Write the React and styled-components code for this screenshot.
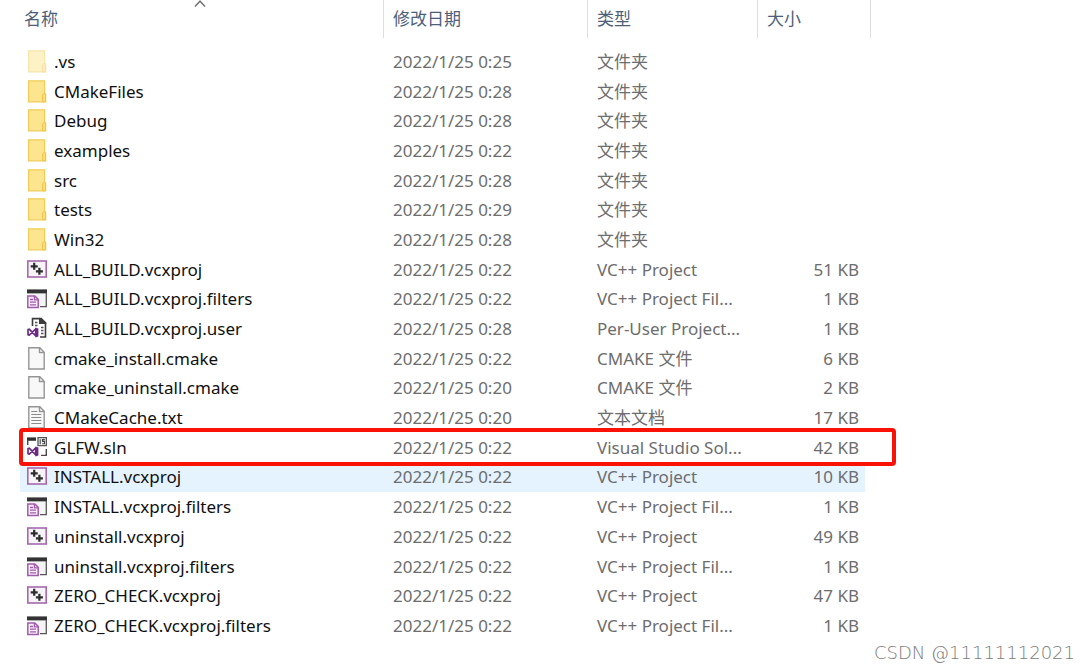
import React from 'react';
import styled, { createGlobalStyle } from 'styled-components';

const GlobalStyle = createGlobalStyle`
  body {
    margin: 0;
    background: #ffffff;
    font-family: "Noto Sans", "Noto Sans CJK SC", sans-serif;
    font-size: 17px;
    line-height: 24px;
  }
`;

const Explorer = styled.main`
  position: relative;
  min-height: 100vh;
  padding-left: 20px;
  box-sizing: border-box;
`;

const FileTable = styled.table`
  width: calc(100% - 219px);
  height: calc(100vh - 29px);
  table-layout: fixed;
  border-collapse: separate;
  border-spacing: 0;
`;

const Column = styled.col`
  width: ${props => props.$width};
`;

const HeaderCell = styled.th`
  position: relative;
  height: 47px;
  padding: 0;
  vertical-align: top;
`;

const HeaderButton = styled.button`
  display: block;
  width: 100%;
  height: 38px;
  padding: 0 0 0 ${props => (props.$first ? '4px' : '9px')};
  border: 0;
  border-right: 1px solid #dedede;
  background: none;
  color: #4c607a;
  font: inherit;
  font-weight: 400;
  text-align: left;
`;

const SortArrow = styled.svg`
  position: absolute;
  top: 0;
  left: calc(50% - 8px);
  width: 12px;
  height: 8px;
`;

const Row = styled.tr`
  position: relative;
  z-index: ${props => (props.$raised ? 1 : 'auto')};
`;

const Cell = styled.td`
  padding: 0 0 0 9px;
  color: #6d6d6d;
  background: ${props => (props.$selected ? '#e5f3ff' : 'transparent')};
  background-clip: padding-box;
  white-space: nowrap;
  vertical-align: middle;
`;

const NameCell = styled(Cell)`
  padding-left: 7px;
  color: #101010;
`;

const SizeCell = styled(Cell)`
  padding-right: 6px;
  border-right: 6px solid transparent;
  text-align: right;
`;

const FileName = styled.div`
  display: flex;
  align-items: center;
  gap: 7px;
`;

const Icon = styled.svg`
  flex: none;
  width: 20px;
  height: 24px;
  opacity: ${props => (props.$faded ? 0.5 : 1)};
`;

const Outline = styled.span`
  position: absolute;
  top: -5px;
  right: -25px;
  bottom: -3px;
  left: -1px;
  border: 4px solid #fb1207;
  border-radius: 4px;
  pointer-events: none;
`;

const Watermark = styled.div`
  position: absolute;
  right: 15px;
  bottom: 5px;
  color: #7c7c7c;
  font-family: "DejaVu Sans", sans-serif;
  font-size: 18px;
  font-weight: 200;
`;

const VsLogo = () => (
  <>
    <path
      d="M1 12.6v5.2l1.2.4 6.6-6.4v7L2.2 12.2z"
      fill="none"
      stroke="#6d2a85"
      strokeWidth="1.7"
      strokeLinejoin="round"
    />
    <path d="M8.4 10.4l3 1.2v7.8l-3 1.2z" fill="#6d2a85" />
  </>
);

const PageShape = () => (
  <path d="M1.8 .7h11l4.4 4.5V22H1.8zM12.5 .7v4.8h4.7" fill="#f8f8f8" stroke="#959595" strokeWidth="1.4" />
);

const drawings = {
  folder: (
    <>
      <path d="M1.6 .8h16v13h1v8h-17z" fill="#fde58f" stroke="#f0cd58" strokeWidth="1.2" />
      <path d="M15.6 21.8v-7l1.5-1.6 1.5 1.6v7z" fill="#fbdc78" stroke="#edc54b" />
    </>
  ),
  project: (
    <>
      <rect x=".8" y="3" width="18.4" height="16" fill="#f6f4f6" stroke="#a768b0" strokeWidth="1.6" />
      <path d="M7.2 4.8v7M3.7 8.3h7M12.4 9.8v7M8.9 13.3h7" stroke="#2c2c2c" strokeWidth="2.2" />
    </>
  ),
  filters: (
    <>
      <path d="M2 7h17v12.5H2z" fill="#f4f4f4" />
      <path d="M0 2.4h20v4H0z" fill="#333333" />
      <path d="M19.3 6v13.6H13" fill="none" stroke="#565656" strokeWidth="1.3" />
      <path d="M.8 9h7l3.4 3.4v8.2H.8z" fill="#f8effa" stroke="#a15bad" strokeWidth="1.5" />
      <path d="M7.4 9v3.8h3.8M3 12.5h3M3 15.2h6M3 17.8h6" fill="none" stroke="#a15bad" strokeWidth="1.3" />
    </>
  ),
  user: (
    <>
      <path d="M5.5 9V1.6h7M18.5 6v14H13" fill="none" stroke="#3c3c3c" strokeWidth="1.6" />
      <path d="M12 .8h2.6l4.7 4.6V7H12z" fill="#3c3c3c" />
      <path d="M8 5.5h2.5M8 8.5h2.5M14 10.5h2.5M14 13.5h2.5M14 16.5h2.5" stroke="#555555" strokeWidth="1.3" />
      <VsLogo />
    </>
  ),
  file: <PageShape />,
  text: (
    <>
      <PageShape />
      <path d="M4.3 5.5h6M4.3 8.5h10M4.3 11.5h10M4.3 14.5h10M4.3 17.5h10" stroke="#898989" strokeWidth="1.2" />
    </>
  ),
  solution: (
    <>
      <path d="M0 1.4h9v3.4H0z" fill="#333333" />
      <path d="M.7 4v5M14 19.4h5.3V13" fill="none" stroke="#494949" strokeWidth="1.4" />
      <path d="M11 1.6h8.4v8H11z" fill="#f2f2f2" stroke="#555555" strokeWidth="1.3" />
      <path d="M13.2 3.2v5M17.8 3.6h-2.3v1.8h2v2.3h-2.3" fill="none" stroke="#444444" strokeWidth="1.1" />
      <VsLogo />
    </>
  )
};

const files = [
  { name: '.vs', date: '2022/1/25 0:25', type: '文件夹', icon: 'folder', faded: true },
  { name: 'CMakeFiles', date: '2022/1/25 0:28', type: '文件夹', icon: 'folder' },
  { name: 'Debug', date: '2022/1/25 0:28', type: '文件夹', icon: 'folder' },
  { name: 'examples', date: '2022/1/25 0:22', type: '文件夹', icon: 'folder' },
  { name: 'src', date: '2022/1/25 0:28', type: '文件夹', icon: 'folder' },
  { name: 'tests', date: '2022/1/25 0:29', type: '文件夹', icon: 'folder' },
  { name: 'Win32', date: '2022/1/25 0:28', type: '文件夹', icon: 'folder' },
  { name: 'ALL_BUILD.vcxproj', date: '2022/1/25 0:22', type: 'VC++ Project', size: '51 KB', icon: 'project' },
  { name: 'ALL_BUILD.vcxproj.filters', date: '2022/1/25 0:22', type: 'VC++ Project Fil...', size: '1 KB', icon: 'filters' },
  { name: 'ALL_BUILD.vcxproj.user', date: '2022/1/25 0:28', type: 'Per-User Project...', size: '1 KB', icon: 'user' },
  { name: 'cmake_install.cmake', date: '2022/1/25 0:22', type: 'CMAKE 文件', size: '6 KB', icon: 'file' },
  { name: 'cmake_uninstall.cmake', date: '2022/1/25 0:20', type: 'CMAKE 文件', size: '2 KB', icon: 'file' },
  { name: 'CMakeCache.txt', date: '2022/1/25 0:20', type: '文本文档', size: '17 KB', icon: 'text' },
  { name: 'GLFW.sln', date: '2022/1/25 0:22', type: 'Visual Studio Sol...', size: '42 KB', icon: 'solution', outlined: true },
  { name: 'INSTALL.vcxproj', date: '2022/1/25 0:22', type: 'VC++ Project', size: '10 KB', icon: 'project', selected: true },
  { name: 'INSTALL.vcxproj.filters', date: '2022/1/25 0:22', type: 'VC++ Project Fil...', size: '1 KB', icon: 'filters' },
  { name: 'uninstall.vcxproj', date: '2022/1/25 0:22', type: 'VC++ Project', size: '49 KB', icon: 'project' },
  { name: 'uninstall.vcxproj.filters', date: '2022/1/25 0:22', type: 'VC++ Project Fil...', size: '1 KB', icon: 'filters' },
  { name: 'ZERO_CHECK.vcxproj', date: '2022/1/25 0:22', type: 'VC++ Project', size: '47 KB', icon: 'project' },
  { name: 'ZERO_CHECK.vcxproj.filters', date: '2022/1/25 0:22', type: 'VC++ Project Fil...', size: '1 KB', icon: 'filters' }
];

function FileRow({ file }) {
  return (
    <Row $raised={file.outlined}>
      <NameCell $selected={file.selected}>
        <FileName>
          <Icon viewBox="0 0 20 24" $faded={file.faded} aria-hidden="true">
            {drawings[file.icon]}
          </Icon>
          {file.name}
        </FileName>
        {file.outlined && <Outline />}
      </NameCell>
      <Cell $selected={file.selected}>{file.date}</Cell>
      <Cell $selected={file.selected}>{file.type}</Cell>
      <SizeCell $selected={file.selected}>{file.size}</SizeCell>
    </Row>
  );
}

export default function App() {
  return (
    <Explorer>
      <GlobalStyle />
      <FileTable>
        <colgroup>
          <Column $width="auto" />
          <Column $width="204px" />
          <Column $width="170px" />
          <Column $width="113px" />
        </colgroup>
        <thead>
          <tr>
            <HeaderCell aria-sort="ascending">
              <HeaderButton type="button" $first>名称</HeaderButton>
              <SortArrow viewBox="0 0 12 8" aria-hidden="true">
                <path d="M1 6.5L6 1.2l5 5.3" fill="none" stroke="#777777" strokeWidth="1.6" />
              </SortArrow>
            </HeaderCell>
            <HeaderCell><HeaderButton type="button">修改日期</HeaderButton></HeaderCell>
            <HeaderCell><HeaderButton type="button">类型</HeaderButton></HeaderCell>
            <HeaderCell><HeaderButton type="button">大小</HeaderButton></HeaderCell>
          </tr>
        </thead>
        <tbody>
          {files.map(file => (
            <FileRow key={file.name} file={file} />
          ))}
        </tbody>
      </FileTable>
      <Watermark>CSDN @11111112021</Watermark>
    </Explorer>
  );
}
